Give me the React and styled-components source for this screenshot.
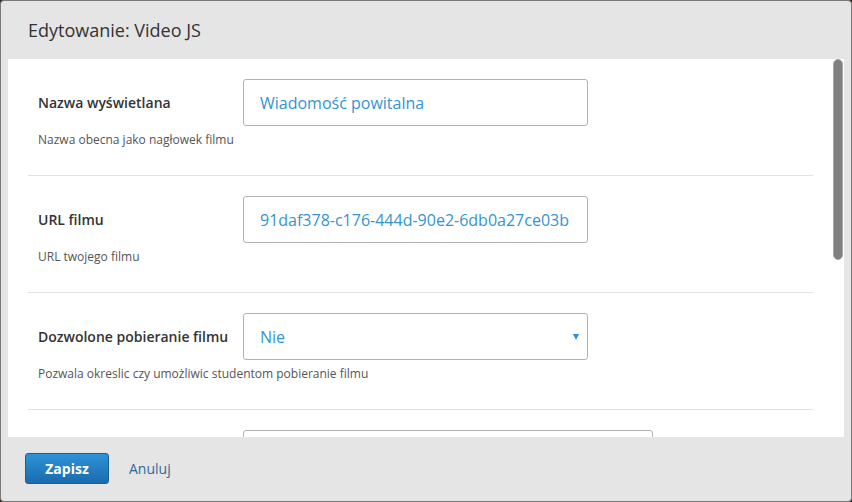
import React from "react";
import styled, { createGlobalStyle } from "styled-components";

const Global = createGlobalStyle`
  html, body { margin: 0; padding: 0; }
  body {
    background: #3a2e26;
    font-family: "Open Sans", "Noto Sans", sans-serif;
    width: 852px;
    height: 502px;
    overflow: hidden;
  }
`;

const Dialog = styled.div`
  box-sizing: border-box;
  width: 852px;
  height: 502px;
  border: 1px solid #7a7a7a;
  border-radius: 4px;
  background: #e5e5e5;
  display: flex;
  flex-direction: column;
`;

const Header = styled.div`
  height: 58px;
  display: flex;
  align-items: center;
  padding-left: 27px;
  font-size: 18px;
  color: #333;
  flex: none;
`;

const Body = styled.div`
  position: relative;
  margin: 0 7px;
  height: 378px;
  flex: none;
  background: #fff;
  overflow: hidden;
`;

const ScrollThumb = styled.div`
  position: absolute;
  top: 0;
  right: 1px;
  width: 10px;
  height: 201px;
  box-sizing: border-box;
  border: 1px solid #a8a8a8;
  border-radius: 5px;
  background: #808080;
`;

const Content = styled.div`
  padding: 0 31px 0 20px;
`;

const Row = styled.div`
  padding: 20px 0 27px 10px;
  border-bottom: 1px solid #e2e2e2;
  display: flex;
  flex-direction: column;
  gap: 6px;
`;

const FieldLine = styled.div`
  display: flex;
  align-items: center;
`;

const Label = styled.div`
  width: 205px;
  flex: none;
  font-size: 14px;
  font-weight: 600;
  color: #333;
`;

const Input = styled.div`
  box-sizing: border-box;
  width: ${(p) => p.$w || 345}px;
  height: ${(p) => p.$h || 47}px;
  border: 1px solid #b3b3b3;
  border-radius: 3px;
  display: flex;
  align-items: center;
  justify-content: space-between;
  padding: 0 8px 0 16px;
  font-size: 16px;
  color: #3494d0;
  white-space: nowrap;
  overflow: hidden;
`;

const Arrow = styled.span`
  width: 0;
  height: 0;
  border-left: 3.5px solid transparent;
  border-right: 3.5px solid transparent;
  border-top: 6px solid #2f8fcf;
  margin-top: 1px;
`;

const Desc = styled.div`
  font-size: 12px;
  line-height: 16px;
  color: #555;
`;

const Footer = styled.div`
  flex: 1;
  display: flex;
  align-items: flex-start;
  padding: 16px 0 0 24px;
  gap: 20px;
`;

const SaveButton = styled.button`
  width: 84px;
  height: 31px;
  border: 1px solid #1c5f92;
  border-radius: 3px;
  background: linear-gradient(#2e92d8, #1a6cac);
  color: #fff;
  font-family: "Open Sans", "Noto Sans", sans-serif;
  font-weight: 700;
  font-size: 14px;
  padding: 0;
`;

const CancelLink = styled.a`
  font-size: 14px;
  line-height: 31px;
  color: #2e6b96;
  text-decoration: none;
`;

const fields = [
  { label: "Nazwa wyświetlana", value: "Wiadomość powitalna", desc: "Nazwa obecna jako nagłowek filmu" },
  { label: "URL filmu", value: "91daf378-c176-444d-90e2-6db0a27ce03b", desc: "URL twojego filmu" },
  { label: "Dozwolone pobieranie filmu", value: "Nie", select: true, desc: "Pozwala okreslic czy umożliwic studentom pobieranie filmu" },
  { label: "", value: "", w: 410, h: 120, desc: "" },
];

export default function App() {
  return (
    <>
      <Global />
      <Dialog>
        <Header>Edytowanie: Video JS</Header>
        <Body>
          <Content>
            {fields.map((f, i) => (
              <Row key={i}>
                <FieldLine>
                  <Label>{f.label}</Label>
                  <Input $w={f.w} $h={f.h}>
                    <span>{f.value}</span>
                    {f.select && <Arrow />}
                  </Input>
                </FieldLine>
                <Desc>{f.desc}</Desc>
              </Row>
            ))}
          </Content>
          <ScrollThumb />
        </Body>
        <Footer>
          <SaveButton>Zapisz</SaveButton>
          <CancelLink href="#">Anuluj</CancelLink>
        </Footer>
      </Dialog>
    </>
  );
}
